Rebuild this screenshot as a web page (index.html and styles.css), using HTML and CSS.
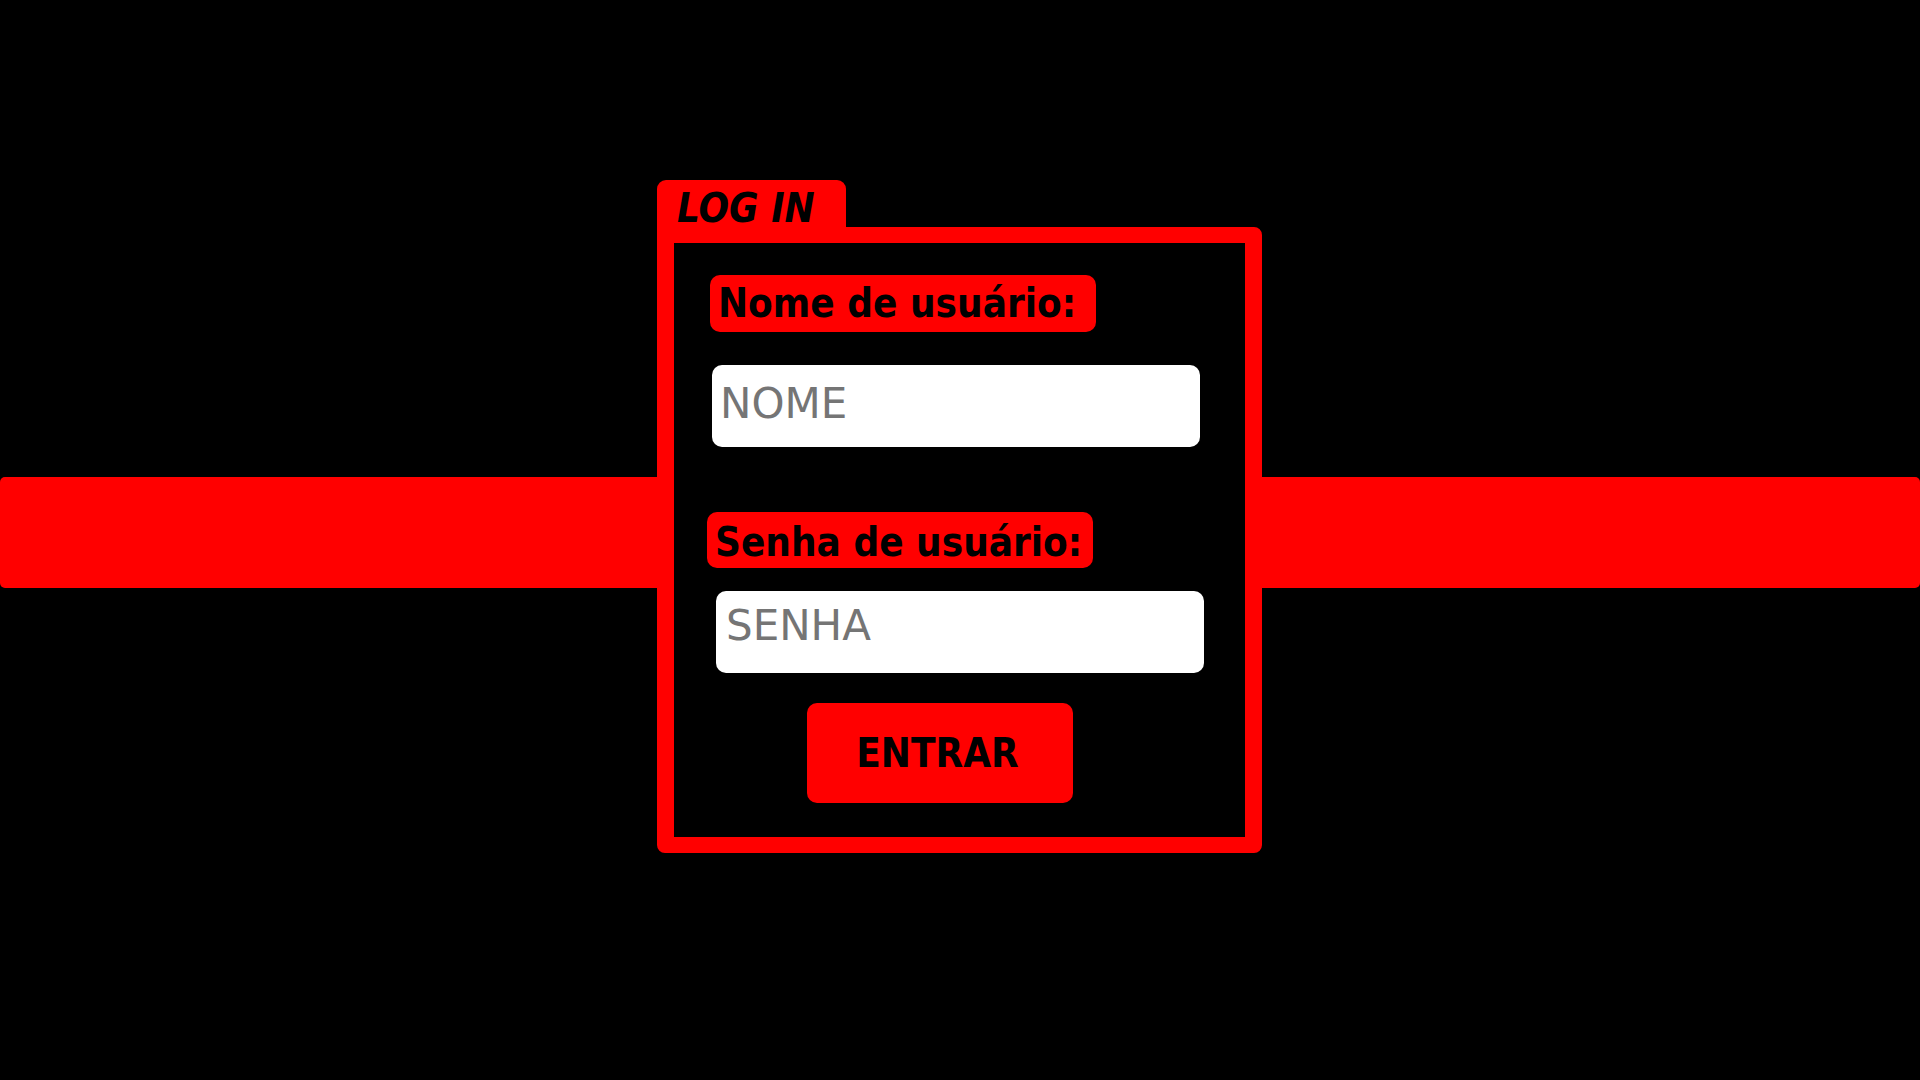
FILE: index.html
```html
<!DOCTYPE html>
<html lang="pt-BR">
  <head>
    <title>Log in</title>
    <meta charset="UTF-8" />
    <meta name="viewport" content="width=device-width" />
    <link rel="stylesheet" href="styles.css">
  </head>
  <body>
    <main class="page">
      <form class="login">
        <div class="tab">LOG IN</div>
        <div class="box">
          <label for="nome" class="label label-nome">Nome de usuário:</label>
          <input type="text" id="nome" class="field field-nome" placeholder="NOME" />
          <label for="senha" class="label label-senha">Senha de usuário:</label>
          <input type="password" id="senha" class="field field-senha" placeholder="SENHA" />
          <button type="submit" class="enter">ENTRAR</button>
        </div>
      </form>
    </main>
  </body>
</html>
```

FILE: styles.css
```css
/* Reset */
* {
  margin: 0;
  padding: 0;
  box-sizing: border-box;
  font-family: "DejaVu Sans", sans-serif;
}

html,
body {
  background-color: #000;
}

/* Page */
.page {
  position: relative;
  height: 100vh;
  padding: 180px 0 0 657px;
  overflow: hidden;
}

/* Red stripe behind the card */
.page::before {
  content: "";
  position: absolute;
  top: 477px;
  left: 0;
  right: 0;
  height: 111px;
  background-color: #ff0000;
  border-radius: 5px;
}

/* Card */
.login {
  position: relative;
  width: 605px;
}

/* Bold condensed texts */
.tab,
.label,
.enter {
  font-family: "DejaVu Sans Condensed", "DejaVu Sans", sans-serif;
  font-stretch: condensed;
  font-size: 40px;
  font-weight: bold;
  color: #000;
}

/* Tab on top */
.tab {
  width: 189px;
  height: 47px;
  padding: 10px 0 0 20px;
  line-height: 37px;
  background-color: #ff0000;
  border-radius: 9px 9px 0 0;
  font-style: italic;
}

/* Frame */
.box {
  display: flex;
  flex-direction: column;
  align-items: flex-start;
  padding: 32px 0 34px;
  border: 16px solid #ff0000;
  border-left-width: 17px;
  border-right-width: 17px;
  border-radius: 0 8px 8px 8px;
  background-color: #000;
}

/* Labels */
.label {
  display: block;
  width: 386px;
  background-color: #ff0000;
  border-radius: 10px;
}

.label-nome {
  height: 57px;
  margin-left: 36px;
  padding-left: 8px;
  line-height: 57px;
}

.label-senha {
  height: 56px;
  margin: 65px 0 0 33px;
  padding: 4px 0 0 8px;
  line-height: 52px;
}

/* Inputs */
.field {
  display: block;
  width: 488px;
  height: 82px;
  border: none;
  outline: none;
  border-radius: 10px;
  background-color: #fff;
  font-size: 42px;
  color: #000;
}

.field::placeholder {
  color: #757575;
}

.field-nome {
  margin: 33px 0 0 38px;
  padding: 0 0 5px 8px;
}

.field-senha {
  margin: 23px 0 0 42px;
  padding: 0 0 13px 10px;
}

/* Button */
.enter {
  width: 266px;
  height: 100px;
  margin: 30px 0 0 133px;
  padding-right: 5px;
  border: none;
  border-radius: 10px;
  background-color: #ff0000;
  line-height: 100px;
  text-align: center;
  cursor: pointer;
}
```
